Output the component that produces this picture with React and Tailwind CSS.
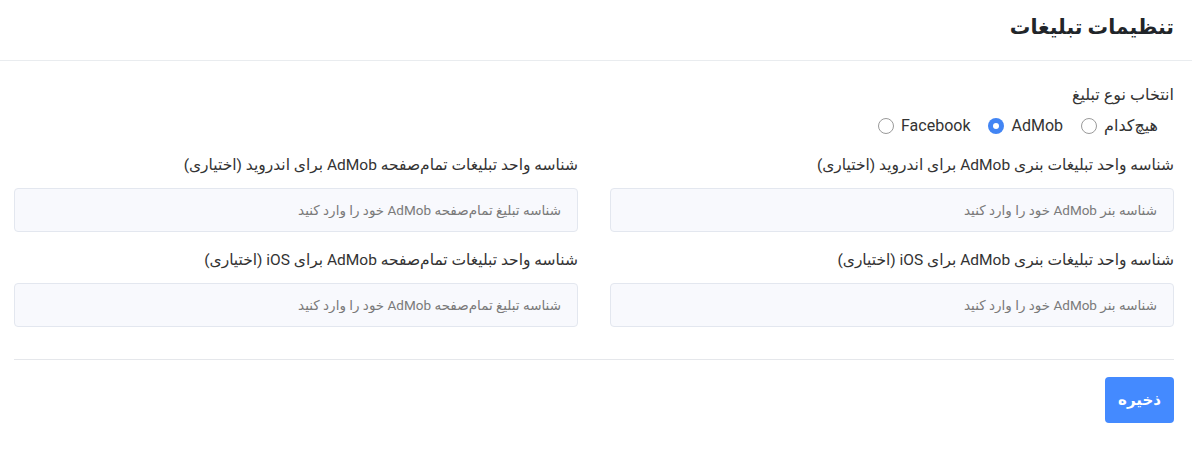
import React from "react";

const font = { fontFamily: "Roboto, 'Noto Sans', 'DejaVu Sans', sans-serif" };

function Field({ label, placeholder }) {
  return (
    <div className="flex flex-col">
      <label className="text-[15.5px] leading-5 text-[#333]">{label}</label>
      <input
        className="mt-[13px] h-[44px] w-full rounded-[4px] border border-[#e3e7ef] bg-[#f8f9fd] px-[16px] text-[13.5px] text-[#333] placeholder:text-[#7a7a7a] outline-none"
        placeholder={placeholder}
        dir="rtl"
      />
    </div>
  );
}

function Radio({ label, checked }) {
  return (
    <label className="flex items-center gap-[7px] cursor-pointer">
      <span className="text-[16px] leading-5 text-[#333]">{label}</span>
      {checked ? (
        <span className="flex h-4 w-4 items-center justify-center rounded-full bg-[#4285f4]">
          <span className="h-[6px] w-[6px] rounded-full bg-white" />
        </span>
      ) : (
        <span className="h-4 w-4 rounded-full border border-[#9a9a9a] bg-white" />
      )}
    </label>
  );
}

export default function App() {
  return (
    <div dir="rtl" style={font} className="w-[1192px] h-[455px] bg-white">
      <div className="flex h-[61px] items-center border-b border-[#e9ecef] pb-[5px] pl-[14px] pr-[18px]">
        <h1 className="text-[20.5px] font-bold text-[#212529]">تنظیمات تبلیغات</h1>
      </div>
      <div className="pl-[14px] pr-[18px]">
        <div className="mt-[24px] text-[16px] leading-5 text-[#333]">انتخاب نوع تبلیغ</div>
        <div className="mt-[11px] flex items-center gap-[18px] pr-[16px]">
          <Radio label="هیچ‌کدام" />
          <Radio label="AdMob" checked />
          <Radio label="Facebook" />
        </div>
        <div className="mt-[19px] grid grid-cols-2 gap-x-[32px] gap-y-[18px]">
          <Field label="شناسه واحد تبلیغات بنری AdMob برای اندروید (اختیاری)" placeholder="شناسه بنر AdMob خود را وارد کنید" />
          <Field label="شناسه واحد تبلیغات تمام‌صفحه AdMob برای اندروید (اختیاری)" placeholder="شناسه تبلیغ تمام‌صفحه AdMob خود را وارد کنید" />
          <Field label="شناسه واحد تبلیغات بنری AdMob برای iOS (اختیاری)" placeholder="شناسه بنر AdMob خود را وارد کنید" />
          <Field label="شناسه واحد تبلیغات تمام‌صفحه AdMob برای iOS (اختیاری)" placeholder="شناسه تبلیغ تمام‌صفحه AdMob خود را وارد کنید" />
        </div>
        <div className="mt-[32px] border-t border-[#e5e7eb]" />
        <div className="mt-[17px] flex">
          <button className="h-[46px] w-[69px] rounded-[4px] bg-[#448aff] text-[15px] font-semibold text-white">ذخیره</button>
        </div>
      </div>
    </div>
  );
}
